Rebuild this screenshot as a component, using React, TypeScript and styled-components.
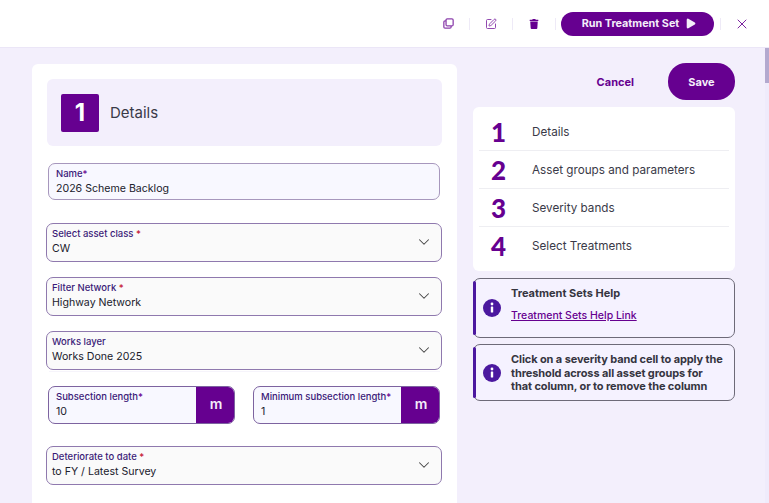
import styled, { createGlobalStyle } from "styled-components";
import { ChevronDown, Play, SquarePen, X } from "lucide-react";
import { FaTrash } from "react-icons/fa";

const purple = "#660090";

const GlobalStyle = createGlobalStyle`
  html, body { margin: 0; height: 100%; overflow: hidden; }
  body { font-family: Inter, "Liberation Sans", sans-serif; color: #2e2e3a; background: #f3effc; }
  * { box-sizing: border-box; }
`;

const Page = styled.div`
  display: flex;
  flex-direction: column;
  height: 503px;
`;

const TopBar = styled.header`
  flex: 0 0 48px;
  display: flex;
  align-items: center;
  justify-content: flex-end;
  padding: 0 7px 0 0;
  background: #fff;
  border-bottom: 1px solid #ebe6f7;
`;

const IconButton = styled.button`
  width: 42px;
  height: 20px;
  display: flex;
  align-items: center;
  justify-content: center;
  padding: 0;
  border: 0;
  background: none;
  color: ${purple};
`;

const CloseButton = styled(IconButton)`
  width: 41px;
`;

const Divider = styled.span`
  width: 1px;
  height: 12px;
  background: #eeeaf7;
`;

const RunButton = styled.button`
  width: 153px;
  height: 24px;
  margin: 0 6px 0 5px;
  padding: 0 0 0 4px;
  display: flex;
  align-items: center;
  justify-content: center;
  gap: 5px;
  border: 0;
  border-radius: 12px;
  background: ${purple};
  color: #f4eefa;
  font: 700 10.8px Inter, sans-serif;
`;

const Body = styled.div`
  flex: 1;
  min-height: 0;
  display: flex;
`;

const Scroller = styled.div`
  flex: 1;
  overflow: hidden;
`;

const ScrollTrack = styled.div`
  flex: 0 0 4px;
  background: #efebfb;
`;

const ScrollThumb = styled.div`
  height: 35px;
  background: #b3a9cf;
`;

const Content = styled.main`
  display: grid;
  grid-template-columns: 425px 262px;
  column-gap: 16px;
  align-items: start;
  padding: 16px 0 0 32px;
`;

const Card = styled.section`
  display: flex;
  flex-direction: column;
  padding: 15px;
  min-height: 500px;
  background: #fff;
  border-radius: 6px;
`;

const StepHeader = styled.div`
  height: 67px;
  display: flex;
  align-items: center;
  gap: 11px;
  padding-left: 14px;
  margin-bottom: 17px;
  background: #f3effc;
  border-radius: 6px;
`;

const StepBox = styled.div`
  width: 38px;
  height: 38px;
  display: flex;
  align-items: center;
  justify-content: center;
  background: ${purple};
  border-radius: 2px;
  color: #fff;
  font-size: 24px;
  font-weight: 700;
`;

const StepTitle = styled.h2`
  margin: 0;
  font-size: 15px;
  font-weight: 400;
  color: #3a3a48;
`;

const InputField = styled.div`
  flex: 1;
  height: 38px;
  display: flex;
  overflow: hidden;
  background: #f8f8ff;
  border: 1px solid #7d63a0;
  border-radius: 7px;
`;

const NameField = styled(InputField)`
  height: 37px;
  margin: 0 2px 23px 1px;
  flex: none;
  border: 1.5px solid #a797bd;
`;

const InputText = styled.div<{ $top?: number }>`
  flex: 1;
  padding: ${(p) => p.$top ?? 3}px 7px 0;
`;

const Label = styled.div`
  font-size: 9.5px;
  line-height: 13px;
  font-weight: 500;
  color: #3b1a78;
  white-space: nowrap;
`;

const Required = styled.span<{ $red?: boolean }>`
  color: ${(p) => (p.$red ? "#c4122f" : purple)};
`;

const Value = styled.div`
  margin-top: 2px;
  font-size: 10.6px;
  line-height: 14px;
  color: #20202c;
`;

const Unit = styled.div`
  flex: 0 0 38px;
  display: flex;
  align-items: center;
  justify-content: center;
  padding: 0 0 3px 2px;
  background: ${purple};
  color: #f4eefa;
  font-size: 14px;
  font-weight: 600;
`;

const SelectField = styled.div<{ $gap?: number }>`
  height: 39px;
  display: flex;
  align-items: center;
  justify-content: space-between;
  margin: 0 0 ${(p) => p.$gap ?? 15}px -1px;
  padding: 0 8px 2px 5px;
  background: #fafafa;
  border: 1px solid #8f79ae;
  border-radius: 7px;
  color: #3a3a48;
`;

const Row = styled.div`
  display: flex;
  gap: 18px;
  margin: 0 2px 22px 1px;
`;

const Separator = styled.hr`
  height: 1px;
  margin: 0 2px 14px;
  border: 0;
  background: #f6f4fb;
`;

const Side = styled.aside`
  display: flex;
  flex-direction: column;
`;

const Actions = styled.div`
  display: flex;
  align-items: center;
  justify-content: flex-end;
  gap: 34px;
  height: 37px;
  margin: -1px 0 7px;
`;

const CancelButton = styled.button`
  padding: 0;
  border: 0;
  background: none;
  color: ${purple};
  font: 700 11px Inter, sans-serif;
`;

const SaveButton = styled.button`
  width: 67px;
  height: 37px;
  border: 0;
  border-radius: 18px;
  background: ${purple};
  color: #f4eefa;
  font: 700 11px Inter, sans-serif;
`;

const Steps = styled.ol`
  margin: 0 0 7px;
  padding: 6px;
  list-style: none;
  background: #fff;
  border-radius: 6px;
`;

const Step = styled.li`
  height: 38px;
  display: flex;
  align-items: center;
  border-bottom: 1px solid #eeeef2;
  &:last-child { border-bottom: 0; }
`;

const StepNumber = styled.span`
  flex: 0 0 53px;
  padding-right: 14px;
  text-align: center;
  color: ${purple};
  font: 900 26px Lato, sans-serif;
`;

const StepLabel = styled.span`
  font-size: 11.7px;
  color: #3a3a48;
`;

const Note = styled.div<{ $h: number }>`
  position: relative;
  height: ${(p) => p.$h}px;
  display: flex;
  align-items: flex-start;
  margin-bottom: 6px;
  padding: 7px 8px 0 37px;
  background: #f5f2ff;
  border: 1px solid #6d6a78;
  border-radius: 7px;
  font-size: 11px;
  color: #35353f;
  &::before {
    content: "";
    position: absolute;
    left: -1px;
    top: 2px;
    bottom: 2px;
    width: 3px;
    background: #4b189f;
    border-radius: 2px;
  }
`;

const NoteIcon = styled.svg`
  position: absolute;
  left: 9px;
  top: 50%;
  margin-top: -9px;
  width: 18px;
  height: 18px;
`;

const NoteTitle = styled.div`
  font-weight: 700;
  line-height: 14px;
  margin-bottom: 8px;
`;

const NoteLink = styled.a`
  color: ${purple};
  text-decoration: underline;
  font-size: 10.5px;
  font-weight: 500;
`;

const NoteBold = styled.div`
  margin-top: 1px;
  font-weight: 700;
  font-size: 11px;
  line-height: 13.5px;
  letter-spacing: -0.1px;
`;

const Select = ({ label, value, required, gap }: { label: string; value: string; required?: boolean; gap?: number }) => (
  <SelectField $gap={gap}>
    <div>
      <Label>
        {label}
        {required && <Required $red> *</Required>}
      </Label>
      <Value>{value}</Value>
    </div>
    <ChevronDown size={18} strokeWidth={1.4} color="#444" />
  </SelectField>
);

const Info = () => (
  <NoteIcon viewBox="0 0 18 18">
    <circle cx="9" cy="9" r="9" fill="#4b189f" />
    <circle cx="9" cy="5" r="1.4" fill="#fff" />
    <rect x="7.8" y="7.5" width="2.4" height="6" rx="0.5" fill="#fff" />
  </NoteIcon>
);

const CopyIcon = () => (
  <svg width="11" height="11" viewBox="0 0 13 13" fill="none" stroke={purple} strokeWidth="1.5" opacity="0.75">
    <rect x="3.6" y="1" width="8.4" height="8.4" rx="1.4" />
    <path d="M3.6 3.4H2.4A1.4 1.4 0 0 0 1 4.8v5.8A1.4 1.4 0 0 0 2.4 12h5.8a1.4 1.4 0 0 0 1.4-1.4V9.4" />
  </svg>
);

export default function App() {
  return (
    <Page>
      <GlobalStyle />
      <TopBar>
        <IconButton><CopyIcon /></IconButton>
        <Divider />
        <IconButton><SquarePen size={12} strokeWidth={1.9} opacity={0.75} /></IconButton>
        <Divider />
        <IconButton><FaTrash size={10} /></IconButton>
        <Divider />
        <RunButton>
          Run Treatment Set
          <Play size={13} fill="#f4eefa" strokeWidth={0} />
        </RunButton>
        <Divider />
        <CloseButton><X size={16} strokeWidth={1.3} /></CloseButton>
      </TopBar>
      <Body>
        <Scroller>
          <Content>
            <Card>
              <StepHeader>
                <StepBox>1</StepBox>
                <StepTitle>Details</StepTitle>
              </StepHeader>
              <NameField>
                <InputText $top={2.5}>
                  <Label>Name<Required>*</Required></Label>
                  <Value>2026 Scheme Backlog</Value>
                </InputText>
              </NameField>
              <Select label="Select asset class" value="CW" required />
              <Select label="Filter Network" value="Highway Network" required />
              <Select label="Works layer" value="Works Done 2025" gap={1} />
              <Separator />
              <Row>
                <InputField>
                  <InputText>
                    <Label>Subsection length<Required>*</Required></Label>
                    <Value>10</Value>
                  </InputText>
                  <Unit>m</Unit>
                </InputField>
                <InputField>
                  <InputText>
                    <Label>Minimum subsection length<Required>*</Required></Label>
                    <Value>1</Value>
                  </InputText>
                  <Unit>m</Unit>
                </InputField>
              </Row>
              <Select label="Deteriorate to date" value="to FY / Latest Survey" required />
            </Card>
            <Side>
              <Actions>
                <CancelButton>Cancel</CancelButton>
                <SaveButton>Save</SaveButton>
              </Actions>
              <Steps>
                <Step><StepNumber>1</StepNumber><StepLabel>Details</StepLabel></Step>
                <Step><StepNumber>2</StepNumber><StepLabel>Asset groups and parameters</StepLabel></Step>
                <Step><StepNumber>3</StepNumber><StepLabel>Severity bands</StepLabel></Step>
                <Step><StepNumber>4</StepNumber><StepLabel>Select Treatments</StepLabel></Step>
              </Steps>
              <Note $h={60}>
                <Info />
                <div>
                  <NoteTitle>Treatment Sets Help</NoteTitle>
                  <NoteLink href="#">Treatment Sets Help Link</NoteLink>
                </div>
              </Note>
              <Note $h={57}>
                <Info />
                <NoteBold>Click on a severity band cell to apply the threshold across all asset groups for that column, or to remove the column</NoteBold>
              </Note>
            </Side>
          </Content>
        </Scroller>
        <ScrollTrack>
          <ScrollThumb />
        </ScrollTrack>
      </Body>
    </Page>
  );
}
